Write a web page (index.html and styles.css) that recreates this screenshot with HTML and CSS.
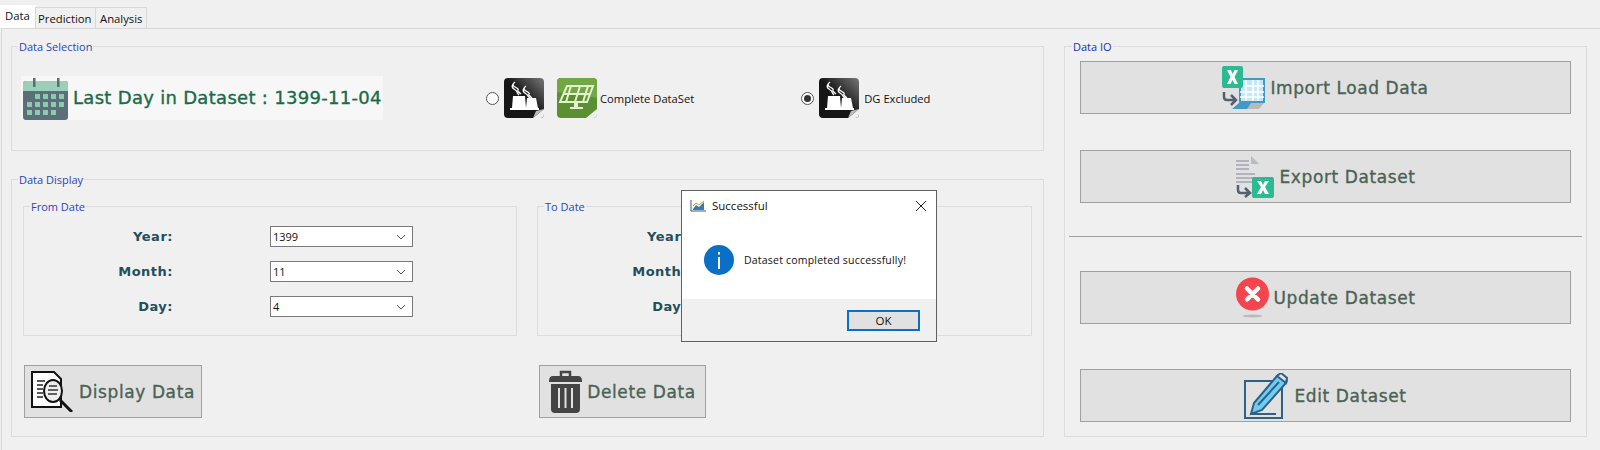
FILE: index.html
```html
<!DOCTYPE html>
<html lang="en">
<head>
    <meta charset="UTF-8">
    <title>Dataset</title>
    <link rel="stylesheet" href="styles.css">
</head>
<body>
    <svg class="defs" width="0" height="0">
        <defs>
            <linearGradient id="plantShine" x1="0" y1="1" x2="1" y2="0">
                <stop offset="0.5" stop-color="#161616"/>
                <stop offset="1" stop-color="#777"/>
            </linearGradient>
        </defs>
        <symbol id="plant" viewBox="0 0 40 40">
            <rect width="40" height="40" rx="4" fill="url(#plantShine)"/>
            <path d="M9 18H21L22 30H8ZM23 20H32L34 30H22ZM6 30H35V32H6Z" fill="#fff"/>
            <path d="M11 4Q7 7 11 9T14 12T17 16M9 6Q7 9 10 11T13 14T15 17M22 8Q18 11 22 13T25 16T28 20M20 10Q18 13 21 15T24 18T26 20" fill="none" stroke="#fff" stroke-width="1.300"/>
            <path d="M29 40L40 31V36Q40 40 36 40Z" fill="#efefef"/>
            <path d="M29 40L32 33L40 31Z" fill="#bbb"/>
        </symbol>
    </svg>

    <div class="tabs">
        <div class="tab tab-active">Data</div>
        <div class="tab">Prediction</div>
        <div class="tab">Analysis</div>
    </div>

    <div class="panel">
        <div class="left-col">
            <fieldset class="group selection-group">
                <legend>Data Selection</legend>
                <div class="last-day">
                    <svg class="calendar" width="45" height="44" viewBox="0 0 45 44">
                        <rect x="0" y="5" width="45" height="39" rx="3" fill="#5b6f7b"/>
                        <path d="M0 15V8Q0 5 3 5H42Q45 5 45 8V15Z" fill="#9ccfb8"/>
                        <rect x="10" y="2" width="2.500" height="9" fill="#5b6f7b"/>
                        <rect x="34" y="2" width="2.500" height="9" fill="#5b6f7b"/>
                        <path d="M12 18h5v5h-5zM20 18h5v5h-5zM28 18h5v5h-5zM36 18h5v5h-5zM4 26h5v5H4zM12 26h5v5h-5zM20 26h5v5h-5zM28 26h5v5h-5zM36 26h5v5h-5zM4 34h5v5H4zM12 34h5v5h-5zM20 34h5v5h-5zM28 34h5v5h-5z" fill="#8dc9ad"/>
                    </svg>
                    <span class="last-day-text">Last Day in Dataset : 1399-11-04</span>
                </div>
                <div class="option option-first">
                    <span class="radio"></span>
                    <svg class="option-icon"><use href="#plant"/></svg>
                    <svg class="option-icon solar" viewBox="0 0 40 40">
                        <rect width="40" height="40" rx="4" fill="#5b9032"/>
                        <path d="M0 4Q0 0 4 0H36Q40 0 40 4V20L0 14Z" fill="#72a745"/>
                        <path d="M10 8H36L30 24H3ZM14 8L9 24M23 8L18 24M31 8L26 24M7 16H33" fill="none" stroke="#e4f0d0" stroke-width="2"/>
                        <path d="M17 25H21V29H26V31H13V29H17Z" fill="#e4f0d0"/>
                        <path d="M29 40L40 31V36Q40 40 36 40Z" fill="#efefef"/>
                    </svg>
                    <span class="option-text">Complete DataSet</span>
                </div>
                <div class="option option-second">
                    <span class="radio radio-on"></span>
                    <svg class="option-icon"><use href="#plant"/></svg>
                    <span class="option-text">DG Excluded</span>
                </div>
            </fieldset>

            <fieldset class="group display-group">
                <legend>Data Display</legend>
                <div class="dates">
                    <fieldset class="group date-group">
                        <legend>From Date</legend>
                        <div class="date-row"><span class="date-label">Year:</span><div class="combo">1399<svg width="10" height="6" viewBox="0 0 10 6"><path d="M1 1L5 5L9 1" fill="none" stroke="#555"/></svg></div></div>
                        <div class="date-row"><span class="date-label">Month:</span><div class="combo">11<svg width="10" height="6" viewBox="0 0 10 6"><path d="M1 1L5 5L9 1" fill="none" stroke="#555"/></svg></div></div>
                        <div class="date-row"><span class="date-label">Day:</span><div class="combo">4<svg width="10" height="6" viewBox="0 0 10 6"><path d="M1 1L5 5L9 1" fill="none" stroke="#555"/></svg></div></div>
                    </fieldset>
                    <fieldset class="group date-group">
                        <legend>To Date</legend>
                        <div class="date-row"><span class="date-label">Year:</span><div class="combo">1399</div></div>
                        <div class="date-row"><span class="date-label">Month:</span><div class="combo">11</div></div>
                        <div class="date-row"><span class="date-label">Day:</span><div class="combo">4</div></div>
                    </fieldset>
                </div>
                <div class="display-actions">
                    <button class="btn btn-display">
                        <svg width="42" height="41" viewBox="0 0 42 41">
                            <path d="M1 1H23L30 8V36H1Z" fill="#fff" stroke="#111" stroke-width="2"/>
                            <path d="M6 10H14M6 14H12M6 18H12M6 22H12M6 26H12" stroke="#222" stroke-width="1.500"/>
                            <ellipse cx="22" cy="20" rx="9" ry="11" fill="#eee" stroke="#111" stroke-width="2"/>
                            <path d="M18 15H26M17 19H27M17 23H26" stroke="#333" stroke-width="1.500"/>
                            <path d="M29 29L41 41" stroke="#111" stroke-width="3"/>
                        </svg>
                        <span>Display Data</span>
                    </button>
                    <button class="btn btn-delete">
                        <svg width="33" height="43" viewBox="0 0 33 43">
                            <path d="M12 6V2H21V6" fill="none" stroke="#444" stroke-width="2.500"/>
                            <path d="M0 11Q0 6 4 6H29Q33 6 33 11V12H0Z" fill="#444"/>
                            <path d="M2 14H31V39Q31 43 27 43H6Q2 43 2 39Z" fill="#444"/>
                            <path d="M10 18V38M16.500 18V38M23 18V38" stroke="#e1e1e1" stroke-width="2"/>
                        </svg>
                        <span>Delete Data</span>
                    </button>
                </div>
            </fieldset>
        </div>

        <fieldset class="group io-group">
            <legend>Data IO</legend>
            <button class="btn btn-io btn-first">
                <svg width="43" height="43" viewBox="0 0 43 43">
                    <path d="M18 13H42V36H18Z" fill="#c6e7f6" stroke="#3f9ac6" stroke-width="2"/>
                    <path d="M24 14V35M31 14V35M36 14V35M18 20H42M18 26H42M18 31H42" stroke="#fff" stroke-width="1.500"/>
                    <path d="M17 37H32L27 43H10Z" fill="#3f9ac6"/>
                    <path d="M29 37H42L37 43H25Z" fill="#b9b9b9"/>
                    <rect width="21" height="22" rx="2" fill="#2db992"/>
                    <path d="M5 4H9L10.500 8L12.500 4H16L12.500 11L16 18H12.500L10.500 14L8.500 18H5L8.500 11Z" fill="#fff"/>
                    <path d="M2 26V31Q2 34 5 34H13M9 29L14 34L9 39" fill="none" stroke="#55606e" stroke-width="2.500"/>
                </svg>
                <span>Import Load Data</span>
            </button>
            <button class="btn btn-io btn-export">
                <svg width="39" height="42" viewBox="0 0 39 42">
                    <path d="M16 0L24 8H16Z" fill="#b8bac4"/>
                    <path d="M1 5H14M1 9H14M1 13H14M1 18H20M1 22H20M1 26H18" stroke="#b0b2bc" stroke-width="2"/>
                    <rect x="17" y="21" width="22" height="21" rx="2" fill="#2db992"/>
                    <path d="M22 25H26L28 29L30 25H34L30 31L34 38H30L28 34L26 38H22L26 31Z" fill="#fff"/>
                    <path d="M3 29V34Q3 37 6 37H13M10 32L15 37L10 41" fill="none" stroke="#55606e" stroke-width="2.500"/>
                </svg>
                <span>Export Dataset</span>
            </button>
            <hr class="divider">
            <button class="btn btn-io btn-update">
                <svg width="33" height="41" viewBox="0 0 33 41">
                    <ellipse cx="16.500" cy="39" rx="10" ry="1.500" fill="#bbb"/>
                    <circle cx="16.500" cy="17" r="16.500" fill="#f4444e"/>
                    <path d="M11 11.500L16.500 17M22 11.500L16.500 17M11 22.500L16.500 17M22 22.500L16.500 17" stroke="#fff" stroke-width="4.500" stroke-linecap="round"/>
                </svg>
                <span>Update Dataset</span>
            </button>
            <button class="btn btn-io btn-edit">
                <svg width="45" height="46" viewBox="0 0 45 46">
                    <path d="M1 8H38V45H1Z" fill="#e1e1e1" stroke="#2f6085" stroke-width="2"/>
                    <path d="M10 30L7 41L18 37L42 10Q44 7 41 4L39 2Q36 0 33 3Z" fill="#6fcdf2" stroke="#2f6085" stroke-width="2"/>
                    <path d="M33 3L37 0L43 5L42 10Z" fill="#dfe6ea" stroke="#2f6085" stroke-width="2"/>
                    <path d="M14 32L35 9" stroke="#2f6085" stroke-width="2"/>
                    <path d="M6 41H32" stroke="#2f6085" stroke-width="2"/>
                </svg>
                <span>Edit Dataset</span>
            </button>
        </fieldset>
    </div>

    <div class="dialog">
        <div class="dialog-title">
            <svg width="16" height="12" viewBox="0 0 16 12">
                <path d="M1 0V11H16" fill="none" stroke="#3a5a80"/>
                <path d="M3 9L6 5L9 7L14 2V10H3Z" fill="#3a7ab0"/>
                <path d="M3 6L6 3L9 5L14 1" fill="none" stroke="#c8a030"/>
            </svg>
            <span>Successful</span>
            <svg class="dialog-close" width="12" height="12" viewBox="0 0 12 12"><path d="M1 1L11 11M11 1L1 11" stroke="#222" stroke-width="1"/></svg>
        </div>
        <div class="dialog-body">
            <svg width="30" height="30" viewBox="0 0 30 30">
                <circle cx="15" cy="15" r="15" fill="#0a6fc7"/>
                <path d="M15 12V24" stroke="#fff" stroke-width="2"/>
                <rect x="14" y="7" width="2" height="2.500" fill="#fff"/>
            </svg>
            <span>Dataset completed successfully!</span>
        </div>
        <div class="dialog-footer">
            <button class="dialog-ok">OK</button>
        </div>
    </div>
</body>
</html>
```

FILE: styles.css
```css
* {
    box-sizing: border-box;
}

body {
    margin: 0;
    height: 450px;
    overflow: hidden;
    background-color: #f0f0f0;
    font-family: "Open Sans", Arial, sans-serif;
    font-size: 11px;
    color: #111;
}

.defs {
    display: block;
    height: 0;
}

/* Tab strip */
.tabs {
    display: flex;
    align-items: flex-end;
    height: 28px;
    padding-top: 5px;
}

.tab {
    height: 21px;
    padding: 0 2px;
    border: 1px solid #d9d9d9;
    border-bottom: none;
    font-size: 11.3px;
    line-height: 21px;
    margin-left: -1px;
}

.tab:nth-child(2) {
    width: 61px;
}

.tab:nth-child(3) {
    width: 52px;
    padding-left: 4px;
}

.tab-active {
    width: 36px;
    height: 23px;
    margin-left: 0;
    padding-left: 5px;
    background-color: #fff;
    border: none;
    line-height: 21px;
}

.panel {
    display: flex;
    gap: 20px;
    height: 422px;
    margin-left: 1px;
    padding: 10px 13px 0 9px;
    border-top: 1px solid #d9d9d9;
    border-left: 1px solid #d9d9d9;
}

.left-col {
    width: 1033px;
}

/* Group boxes */
.group {
    margin: 0;
    padding: 0;
    min-width: 0;
    border: 1px solid #dcdcdc;
}

.group legend {
    height: 15px;
    margin-left: 6px;
    padding: 0 1px;
    font-size: 11px;
    line-height: 15px;
    color: #2b45b8;
}

.selection-group {
    display: flex;
    align-items: flex-start;
    height: 112px;
    padding-top: 22px;
}

.last-day {
    display: flex;
    align-items: center;
    gap: 5px;
    width: 362px;
    height: 44px;
    margin-left: 9px;
    padding-left: 2px;
    background-color: #f7f7f7;
    font-family: "DejaVu Sans", Verdana, sans-serif;
    font-size: 18px;
    letter-spacing: 0.3px;
    color: #1a6b47;
    white-space: nowrap;
    -webkit-text-stroke: 0.35px #1a6b47;
}

.last-day-text {
    margin-bottom: 2px;
}

.option {
    display: flex;
    align-items: center;
    height: 40px;
    margin-top: 2px;
}

.option-first {
    margin-left: 103px;
}

.option-second {
    margin-left: 107px;
}

.radio {
    width: 13px;
    height: 13px;
    margin-right: 5px;
    border: 1px solid #555;
    border-radius: 50%;
    background-color: #fff;
    display: flex;
    align-items: center;
    justify-content: center;
}

.radio-on::after {
    content: "";
    width: 7px;
    height: 7px;
    border-radius: 50%;
    background-color: #333;
}

.option-icon {
    width: 40px;
    height: 40px;
}

.solar {
    margin-left: 13px;
}

.option-text {
    margin-left: 3px;
    font-size: 11.2px;
}

.option-second .option-text {
    margin-left: 5px;
}

.display-group {
    height: 265px;
    margin-top: 21px;
    padding-top: 12px;
}

.dates {
    display: flex;
    gap: 20px;
    margin-left: 11px;
}

.date-group {
    width: 495px;
    height: 137px;
    padding-top: 12px;
}

.date-group:first-child {
    width: 494px;
}

.date-row {
    display: flex;
    align-items: center;
    height: 21px;
    margin-bottom: 14px;
}

.date-label {
    width: 149px;
    font-family: "DejaVu Sans", Verdana, sans-serif;
    font-size: 13px;
    font-weight: bold;
    letter-spacing: 0.5px;
    text-align: right;
    color: #1f4f5c;
}

.combo {
    display: flex;
    align-items: center;
    justify-content: space-between;
    width: 143px;
    height: 21px;
    margin-left: 97px;
    padding: 0 6px 0 2px;
    border: 1px solid #7a7a7a;
    background-color: #fff;
    font-size: 11px;
}

.display-actions {
    display: flex;
    margin-top: 29px;
    margin-left: 12px;
}

/* Buttons */
.btn {
    display: flex;
    align-items: center;
    justify-content: center;
    height: 53px;
    padding: 0;
    border: 1px solid #a0a0a0;
    background-color: #e1e1e1;
    font-family: "DejaVu Sans", Verdana, sans-serif;
    font-size: 17px;
    letter-spacing: 0.6px;
    color: #4a6355;
    -webkit-text-stroke: 0.35px #4a6355;
    white-space: nowrap;
}

.btn-display {
    width: 178px;
    gap: 6px;
}

.btn-delete {
    width: 167px;
    margin-left: 337px;
    gap: 5px;
}

.io-group {
    width: 523px;
    height: 398px;
    padding: 7px 15px 0;
    display: block;
}

.io-group legend {
    margin-left: -8px;
    color: #1a2fb0;
}

.btn-io {
    width: 491px;
    gap: 5px;
}

.btn-export {
    margin-top: 36px;
}

.divider {
    height: 1px;
    margin: 33px -11px 34px;
    border: none;
    background-color: #a0a0a0;
}

.btn-edit {
    margin-top: 45px;
}

/* Message box on top */
.dialog {
    position: absolute;
    left: 681px;
    top: 190px;
    width: 256px;
    height: 152px;
    display: flex;
    flex-direction: column;
    border: 1px solid #606060;
    background-color: #fff;
}

.dialog-title {
    display: flex;
    align-items: center;
    height: 29px;
    padding: 0 9px 0 8px;
    gap: 6px;
    font-size: 11.5px;
}

.dialog-close {
    margin-left: auto;
}

.dialog-body {
    flex: 1;
    display: flex;
    align-items: center;
    gap: 10px;
    padding: 0 22px;
    font-size: 10.5px;
    letter-spacing: 0.2px;
}

.dialog-footer {
    display: flex;
    justify-content: flex-end;
    height: 42px;
    padding: 11px 16px 0 0;
    background-color: #f0f0f0;
}

.dialog-ok {
    width: 73px;
    height: 21px;
    padding: 0;
    border: 2px solid #0a6fc7;
    background-color: #e1e1e1;
    font-family: "Open Sans", Arial, sans-serif;
    font-size: 11.5px;
    color: #111;
}
```
